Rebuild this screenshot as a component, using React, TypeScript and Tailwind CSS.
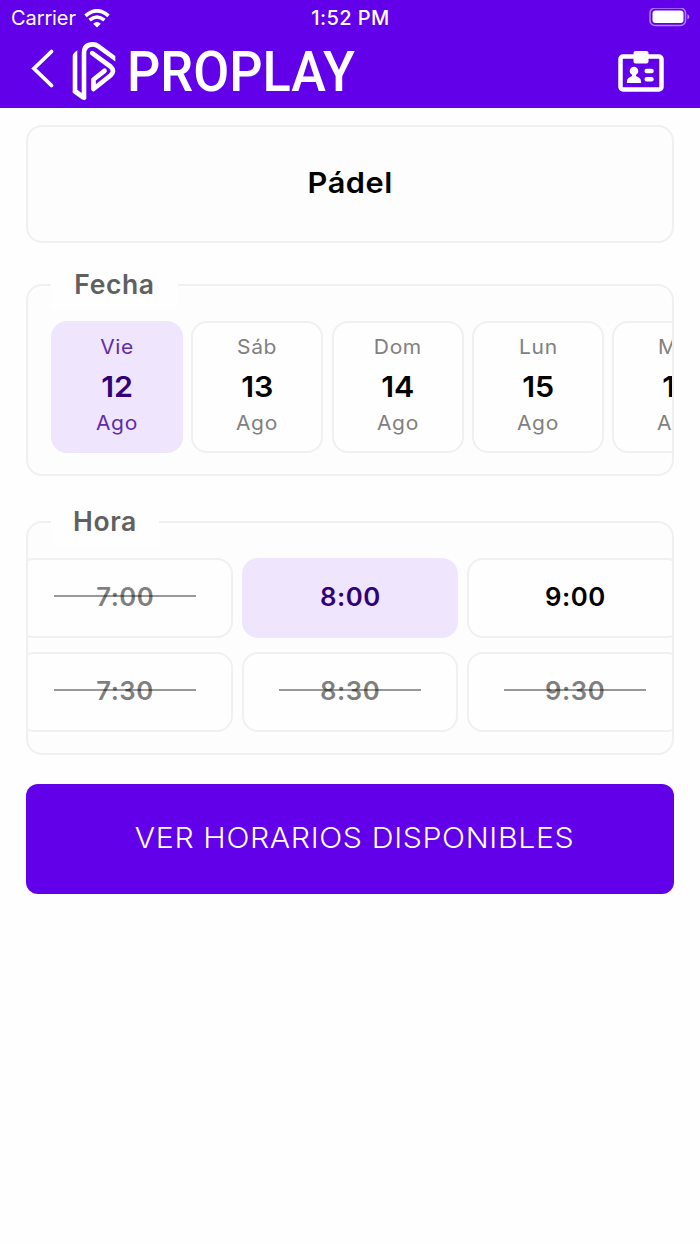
import React from 'react';

interface DateOption {
  day: string;
  date: number;
  month: string;
}

interface TimeOption {
  label: string;
  disabled?: boolean;
}

const dates: DateOption[] = [
  { day: 'Vie', date: 12, month: 'Ago' },
  { day: 'Sáb', date: 13, month: 'Ago' },
  { day: 'Dom', date: 14, month: 'Ago' },
  { day: 'Lun', date: 15, month: 'Ago' },
  { day: 'Mar', date: 16, month: 'Ago' },
];

const times: TimeOption[] = [
  { label: '7:00', disabled: true },
  { label: '8:00' },
  { label: '9:00' },
  { label: '7:30', disabled: true },
  { label: '8:30', disabled: true },
  { label: '9:30', disabled: true },
];

export default function App() {
  const selectedDate = 12;
  const selectedTime = '8:00';

  return (
    <div className="min-h-[1244px] w-[700px] overflow-hidden bg-[#fefefe] font-['Inter',sans-serif]">
      <Header />

      <main className="px-[26px] pt-[17px]">
        <div className="flex h-[118px] items-center justify-center rounded-2xl border-2 border-[#f0f0f0] bg-[#fdfdfd]">
          <h1 className="scale-x-[1.06] pb-[2px] text-[29px] font-semibold tracking-[0.5px] text-black">Pádel</h1>
        </div>

        <Panel title="Fecha" className="mt-[41px] h-[192px]" titleClass="w-[127px]">
          <div className="ml-[23px] flex w-max gap-[8.3px]">
            {dates.map(d => (
              <DateCell key={d.date} option={d} selected={d.date === selectedDate} />
            ))}
          </div>
        </Panel>

        <Panel title="Hora" className="mt-[45px] h-[234px]" titleClass="w-[108px]">
          <div className="-ml-[11px] grid w-max grid-cols-[216px_216px_216px] gap-x-[9px] gap-y-[14px]">
            {times.map(t => (
              <TimeCell key={t.label} option={t} selected={t.label === selectedTime} />
            ))}
          </div>
        </Panel>

        <button className="mt-[29px] flex h-[110px] w-full items-center justify-center rounded-xl bg-[#6200ea] pb-[2px] pl-[9px] text-[28px] font-light text-white">
          <span className="inline-block scale-x-[1.08] tracking-[0.6px]">VER HORARIOS DISPONIBLES</span>
        </button>
      </main>
    </div>
  );
}

function Header() {
  return (
    <header className="h-[108px] bg-[#6200ea] text-white">
      <div className="grid h-9 grid-cols-3 items-center pl-[11px] pr-[10px]">
        <div className="flex items-center gap-2">
          <span className="text-[20px] leading-none tracking-[-0.1px]">Carrier</span>
          <WifiIcon />
        </div>
        <span className="text-center text-[20px] font-medium leading-none tracking-[0.4px]">1:52 PM</span>
        <div className="flex justify-end">
          <BatteryIcon />
        </div>
      </div>
      <div className="flex h-[72px] items-center pl-[30px] pr-9">
        <svg width="26" height="42" viewBox="0 0 26 42" fill="none" className="-mt-2 shrink-0">
          <path d="M21.500 4.500 4 21.500 21.500 38.500" stroke="currentColor" strokeWidth="3.800" strokeLinecap="round" strokeLinejoin="miter" />
        </svg>
        <LogoMark />
        <div className="ml-[9px] w-[236px]">
          <span className="inline-block origin-left scale-x-[0.95] font-[Roboto,sans-serif] text-[55px] font-medium leading-[60px]">
            PROPLAY
          </span>
        </div>
        <BadgeIcon />
      </div>
    </header>
  );
}

function LogoMark() {
  return (
    <svg width="48" height="62" viewBox="70 40 48 62" fill="none" className="-mt-[2px] ml-[14px] shrink-0">
      <path
        d="M77.300 50.300V89.800L81.700 93V53Q81.700 42 93 42Q96.500 42 99.500 44.200L115.300 56V61.500L97 48.200Q95 46.700 93 46.700Q86.300 46.700 86.300 53.500V99L84.500 100.300 81.700 99.300 72.700 92.700V56Q72.700 54 74.500 52.500Z"
        fill="currentColor"
      />
      <path
        d="M92.200 53.200 110.500 66.500Q115.500 71 110.500 75.500L93.500 89V79.500L104.500 70.800"
        stroke="currentColor"
        strokeWidth="4.700"
        strokeLinecap="round"
        strokeLinejoin="round"
      />
    </svg>
  );
}

function WifiIcon() {
  return (
    <svg width="26" height="19" viewBox="0 0 26 19" fill="none" stroke="currentColor" strokeWidth="3.600">
      <path d="M1.500 6.800Q13-3.200 24.500 6.800" />
      <path d="M5.600 11.200Q13 4.800 20.400 11.200" />
      <path d="M13 18.500 9.200 14.700Q13 11.500 16.800 14.700Z" fill="currentColor" stroke="none" />
    </svg>
  );
}

function BatteryIcon() {
  return (
    <svg width="41" height="20" viewBox="0 0 41 20" fill="none">
      <rect x="1" y="0" width="35.500" height="17.500" rx="5" stroke="white" strokeOpacity="0.5" strokeWidth="1.500" />
      <rect x="3.500" y="2.500" width="31" height="12.500" rx="3" fill="white" />
      <path d="M38.500 6Q42 8.800 38.500 11.600Z" fill="white" fillOpacity="0.6" />
    </svg>
  );
}

function BadgeIcon() {
  return (
    <svg width="46" height="42" viewBox="0 0 46 42" className="-mt-px ml-auto shrink-0">
      <rect x="2.500" y="5.500" width="41" height="33" rx="2.500" fill="none" stroke="currentColor" strokeWidth="4.500" />
      <rect x="15.500" y="0" width="15" height="12.500" rx="2" fill="currentColor" />
      <circle cx="16" cy="20" r="4.300" fill="currentColor" />
      <path d="M14 22.500H18V25L21.500 27Q23.200 28.200 23.200 32H8.800Q8.800 28.200 10.500 27L14 25Z" fill="currentColor" />
      <path d="M28.700 20H33.500M28.700 28.200H33.500" stroke="currentColor" strokeWidth="4.500" strokeLinecap="round" />
    </svg>
  );
}

interface PanelProps {
  title: string;
  className: string;
  titleClass: string;
  children: React.ReactNode;
}

function Panel({ title, className, titleClass, children }: PanelProps) {
  return (
    <section className={`rounded-2xl border-2 border-[#f0f0f0] bg-[#fdfdfd] ${className}`}>
      <h2
        className={`-mt-[25px] ml-[23px] flex h-[48px] items-center justify-center bg-[#fefefe] text-[26.500px] font-semibold tracking-[0.6px] text-[#606060] ${titleClass}`}
      >
        {title}
      </h2>
      <div className="mt-3 overflow-hidden">{children}</div>
    </section>
  );
}

function DateCell({ option, selected }: { option: DateOption; selected: boolean }) {
  return (
    <div
      className={`flex h-[132px] w-[132px] shrink-0 flex-col items-center rounded-2xl border-2 pt-[9px] ${
        selected ? 'border-[#efe5fd] bg-[#efe5fd] text-[#5f2ba8]' : 'border-[#f0f0f0] bg-[#fefefe] text-[#808080]'
      }`}
    >
      <span className="scale-x-105 text-[20px] leading-[30px] tracking-[0.6px]">{option.day}</span>
      <span className={`scale-x-105 text-[29px] font-semibold leading-[50px] ${selected ? 'text-[#310078]' : 'text-black'}`}>
        {option.date}
      </span>
      <span className="scale-x-105 text-[20px] leading-[22px] tracking-[0.6px]">{option.month}</span>
    </div>
  );
}

function TimeCell({ option, selected }: { option: TimeOption; selected: boolean }) {
  const color = option.disabled ? 'text-black/50' : selected ? 'text-[#310078]' : 'text-black';

  return (
    <div
      className={`relative flex h-20 items-center justify-center rounded-2xl border-2 ${
        selected ? 'border-[#efe5fd] bg-[#efe5fd]' : 'border-[#f0f0f0] bg-[#fefefe]'
      }`}
    >
      <span className={`scale-x-[1.03] pb-px text-[25px] font-semibold tracking-[0.5px] ${color}`}>{option.label}</span>
      {option.disabled && <span className="absolute left-[35px] top-[35px] h-[2px] w-[142px] bg-black/40" />}
    </div>
  );
}
